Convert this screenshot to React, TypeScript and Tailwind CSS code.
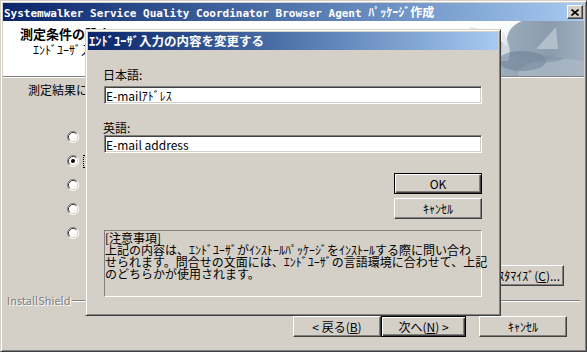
import React from "react";

const jp = "font-['Noto_Sans_CJK_JP',sans-serif]";

const raised =
  "bg-[#d4d0c8] border border-t-white border-l-white border-r-[#404040] border-b-[#404040] shadow-[inset_-1px_-1px_#808080]";
const raisedDefault =
  "bg-[#d4d0c8] border border-black shadow-[inset_1px_1px_#fff,inset_-1px_-1px_#404040,inset_-2px_-2px_#808080]";
const sunken =
  "bg-white border border-t-[#808080] border-l-[#808080] border-r-white border-b-white shadow-[inset_1px_1px_#404040,inset_-1px_-1px_#d4d0c8]";
const frame =
  "bg-[#d4d0c8] border border-t-[#d4d0c8] border-l-[#d4d0c8] border-r-[#404040] border-b-[#404040] shadow-[inset_1px_1px_#fff,inset_-1px_-1px_#808080] p-[2px]";

function Button({
  children,
  className = "",
  isDefault = false,
}: {
  children: React.ReactNode;
  className?: string;
  isDefault?: boolean;
}) {
  return (
    <div
      className={`h-[21px] flex items-center justify-center leading-[13px] whitespace-nowrap ${
        isDefault ? raisedDefault : raised
      } ${className}`}
    >
      {children}
    </div>
  );
}

function Radio({ checked }: { checked?: boolean }) {
  return (
    <svg width="12" height="12" viewBox="0 0 12 12" className="shrink-0">
      <circle cx="6" cy="6" r="5" fill="#fff" />
      <path d="M2.11 9.89 A5.5 5.5 0 0 1 9.89 2.11" stroke="#808080" fill="none" />
      <path d="M9.89 2.11 A5.5 5.5 0 0 1 2.11 9.89" stroke="#fff" fill="none" />
      <path d="M2.82 9.18 A4.5 4.5 0 0 1 9.18 2.82" stroke="#404040" fill="none" />
      <path d="M9.18 2.82 A4.5 4.5 0 0 1 2.82 9.18" stroke="#d4d0c8" fill="none" />
      {checked && <circle cx="6" cy="6" r="2" fill="#000" />}
    </svg>
  );
}

function HeaderArt() {
  return (
    <svg width="114" height="55" viewBox="0 0 114 55" className="shrink-0">
      <defs>
        <linearGradient id="hg" x1="0" y1="0" x2="1" y2="0">
          <stop offset="0" stopColor="#e9edf1" />
          <stop offset="0.3" stopColor="#9aabbb" />
          <stop offset="0.7" stopColor="#8a9cae" />
          <stop offset="1" stopColor="#9fafbe" />
        </linearGradient>
      </defs>
      <rect width="114" height="55" fill="url(#hg)" />
      <ellipse cx="90" cy="52" rx="42" ry="14" fill="#aebbc7" opacity="0.7" />
      <path d="M0 0 H52 C42 4 35 12 37 26 C28 16 14 8 0 6 Z" fill="#ffffff" opacity="0.95" />
      <path d="M32 10 C38 18 42 28 38 40 L31 40 Z" fill="#dde3e9" opacity="0.8" />
      <path d="M86 6 L88 28 L66 28 Z" fill="#b9c5d0" opacity="0.85" />
      <ellipse cx="52" cy="40" rx="24" ry="10" fill="#6e8195" opacity="0.55" />
      <path d="M40 32 C56 26 72 36 94 38 C80 44 60 42 40 32 Z" fill="#7a8ea2" opacity="0.5" />
    </svg>
  );
}

export default function App() {
  const options = ["ﾒｰﾙｱﾄﾞﾚｽ", "E-mailｱﾄﾞﾚｽ", "電話番号", "URL", "その他"];
  return (
    <div className={`relative w-[587px] h-[352px] flex flex-col overflow-hidden text-[12px] text-black ${frame} ${jp}`}>
      {/* main title bar */}
      <div className="h-[18px] shrink-0 flex items-center bg-linear-to-r from-[#0a246a] to-[#a6caf0] pl-[1px] pr-[1px]">
        <span className="text-white font-bold text-[11px] leading-none whitespace-nowrap font-['DejaVu_Sans_Mono',monospace]">
          Systemwalker Service Quality Coordinator Browser Agent{" "}
          <span className={`text-[12px] ${jp}`}>ﾊﾟｯｹｰｼﾞ作成</span>
        </span>
        <div className={`ml-auto w-[16px] h-[14px] flex items-center justify-center ${raised}`}>
          <svg width="8" height="7" viewBox="0 0 8 7">
            <path d="M0.5 0.5 L7.5 6.5 M7.5 0.5 L0.5 6.5" stroke="#000" strokeWidth="1.6" />
          </svg>
        </div>
      </div>

      {/* header */}
      <div className="h-[55px] shrink-0 bg-white flex">
        <div className="pl-[17px] pt-[6px] whitespace-nowrap">
          <div className="font-bold text-[13px] leading-[13px]">測定条件の設定</div>
          <div className="pl-[13px] mt-[3px] leading-[13px]">ｴﾝﾄﾞﾕｰｻﾞ入力の内容を設定します。</div>
        </div>
        <div className="ml-auto">
          <HeaderArt />
        </div>
      </div>
      <div className="h-[2px] shrink-0 border-t border-t-[#808080] border-b border-b-white" />

      {/* body */}
      <div className="flex-1 flex flex-col">
        <div className="mt-[5px] pl-[25px] leading-[13px] whitespace-nowrap">測定結果に関する問い合わせ先の項目を選択してください。</div>
        <div className="mt-[35px] pl-[64px] flex flex-col">
          {options.map((o, i) => (
            <div key={o} className="h-[24px] flex items-start">
              <Radio checked={i === 1} />
              <span
                className={`ml-[4px] leading-[11px] px-[1px] border border-dotted whitespace-nowrap ${
                  i === 1 ? "border-black" : "border-transparent"
                }`}
              >
                {o}
              </span>
            </div>
          ))}
        </div>
        <div className="mt-[14px] flex justify-end pr-[20px]">
          <Button className="w-[120px] justify-end pr-[3px]">
            ｶｽﾀﾏｲｽﾞ(<span className="underline">C</span>)...
          </Button>
        </div>
        <div className="mt-[8px] h-[13px] flex items-center pl-[4px] pr-[4px]">
          <span className="text-[#808080] text-[11px] leading-[13px] [text-shadow:1px_1px_#fff]">InstallShield</span>
          <div className="flex-1 ml-[2px] h-[2px] border-t border-t-[#808080] border-b border-b-white" />
        </div>
        <div className="mt-[9px] flex justify-end pr-[17px]">
          <Button className="w-[88px]">
            &lt; 戻る(<span className="underline">B</span>)
          </Button>
          <Button isDefault className="w-[85px]">
            次へ(<span className="underline">N</span>) &gt;
          </Button>
          <Button className="w-[88px] ml-[13px]">ｷｬﾝｾﾙ</Button>
        </div>
      </div>

      {/* modal dialog */}
      <div className={`absolute left-[84px] top-[28px] w-[416px] h-[287px] flex flex-col ${frame}`}>
        <div className="h-[18px] shrink-0 flex items-center bg-linear-to-r from-[#0a246a] to-[#a6caf0] pl-[1px]">
          <span className="text-white font-bold text-[12.5px] leading-none whitespace-nowrap">ｴﾝﾄﾞﾕｰｻﾞ入力の内容を変更する</span>
        </div>
        <div className="flex-1 flex flex-col px-[16px]">
          <div className="mt-[18px] ml-[-1px] leading-[13px]">日本語:</div>
          <div className={`mt-[5px] h-[18px] flex items-center pl-[1px] leading-[13px] ${sunken}`}>E-mailｱﾄﾞﾚｽ</div>
          <div className="mt-[17px] ml-[-1px] leading-[13px]">英語:</div>
          <div className={`mt-[1px] h-[18px] flex items-center pl-[1px] leading-[13px] ${sunken}`}>E-mail address</div>
          <Button isDefault className="self-end mt-[20px] w-[88px]">OK</Button>
          <Button className="self-end mt-[4px] w-[88px]">ｷｬﾝｾﾙ</Button>
          <div className="mt-[11px] h-[67px] border border-t-[#808080] border-l-[#808080] border-r-white border-b-white pt-[1px] leading-[12px] whitespace-nowrap">
            <div>[注意事項]</div>
            <div>上記の内容は、ｴﾝﾄﾞﾕｰｻﾞがｲﾝｽﾄｰﾙﾊﾟｯｹｰｼﾞをｲﾝｽﾄｰﾙする際に問い合わ</div>
            <div>せられます。問合せの文面には、ｴﾝﾄﾞﾕｰｻﾞの言語環境に合わせて、上記</div>
            <div>のどちらかが使用されます。</div>
          </div>
        </div>
      </div>
    </div>
  );
}
